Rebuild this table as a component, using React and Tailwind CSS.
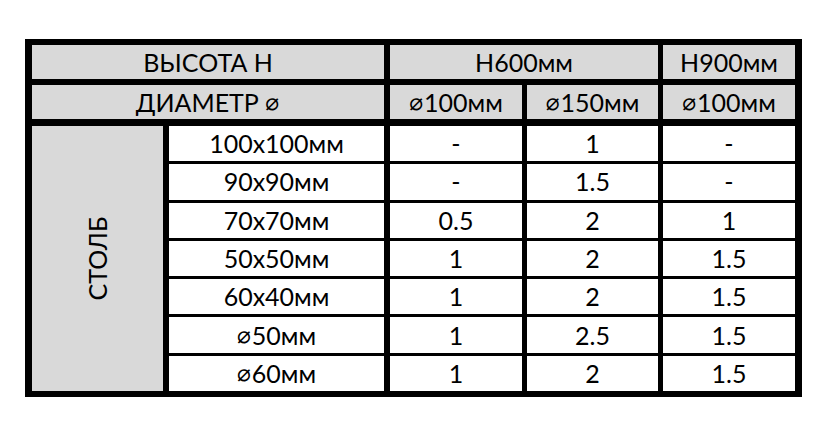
// Table of posts / diameters
const font = { fontFamily: "Lato, 'Open Sans', sans-serif" };

const rows = [
  { size: "100x100мм", c: "-", d: "1", e: "-" },
  { size: "90x90мм", c: "-", d: "1.5", e: "-" },
  { size: "70x70мм", c: "0.5", d: "2", e: "1" },
  { size: "50x50мм", c: "1", d: "2", e: "1.5" },
  { size: "60x40мм", c: "1", d: "2", e: "1.5" },
  { size: "50мм", dia: true, c: "1", d: "2.5", e: "1.5" },
  { size: "60мм", dia: true, c: "1", d: "2", e: "1.5" },
];

function Dia() {
  return <span className="text-[23px] mr-[1px] font-['DejaVu_Sans',sans-serif]">⌀</span>;
}

export default function App() {
  return (
    <div className="w-[830px] h-[426px] bg-white pt-[39px] pl-[25px]" style={font}>
      <div className="w-[777px] bg-black pt-[6px] pb-[6px] px-[7px] flex flex-col text-[25px] text-black leading-none">
        {/* header row 1 */}
        <div className="flex h-[34px]">
          <div className="w-[352px] bg-[#d9d9d9] flex items-center justify-center">ВЫСОТА Н</div>
          <div className="w-[268px] ml-[6px] bg-[#d9d9d9] flex items-center justify-center">Н600мм</div>
          <div className="w-[132px] ml-[5px] bg-[#d9d9d9] flex items-center justify-center">Н900мм</div>
        </div>

        {/* header row 2 */}
        <div className="flex h-[34px] mt-[6px]">
          <div className="w-[352px] bg-[#d9d9d9] flex items-center justify-center">ДИАМЕТР&nbsp;<Dia /></div>
          <div className="w-[132px] ml-[6px] bg-[#d9d9d9] flex items-center justify-center"><Dia />100мм</div>
          <div className="w-[131px] ml-[5px] bg-[#d9d9d9] flex items-center justify-center"><Dia />150мм</div>
          <div className="w-[132px] ml-[5px] bg-[#d9d9d9] flex items-center justify-center"><Dia />100мм</div>
        </div>

        {/* body */}
        <div className="flex h-[265px] mt-[7px]">
          <div className="w-[131px] bg-[#d9d9d9] flex items-center justify-center">
            <span className="-rotate-90 inline-block">СТОЛБ</span>
          </div>
          <div className="ml-[6px] flex-1 grid grid-rows-7 gap-[3px]">
            {rows.map((r) => (
              <div key={r.size} className="flex">
                <div className="w-[215px] bg-white flex items-center justify-center">{r.dia && <Dia />}{r.size}</div>
                <div className="w-[132px] ml-[6px] bg-white flex items-center justify-center">{r.c}</div>
                <div className="w-[131px] ml-[5px] bg-white flex items-center justify-center">{r.d}</div>
                <div className="w-[132px] ml-[5px] bg-white flex items-center justify-center">{r.e}</div>
              </div>
            ))}
          </div>
        </div>
      </div>
    </div>
  );
}
